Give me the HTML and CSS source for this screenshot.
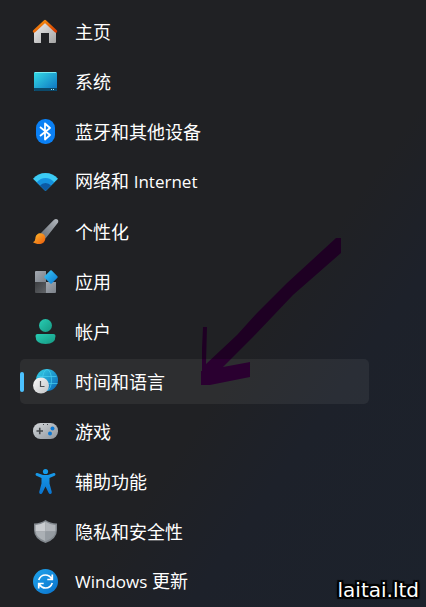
FILE: index.html
```html
<!DOCTYPE html>
<html lang="zh-CN">
<head>
    <meta charset="utf-8">
    <meta name="viewport" content="width=device-width, initial-scale=1">
    <title>设置</title>
    <link rel="stylesheet" href="styles.css">
</head>
<body>
<nav class="menu">
    <a class="item" href="#home">
        <svg class="icon" viewBox="0 0 27 27">
            <defs>
                <linearGradient id="wall" x1="0" y1="0" x2="1" y2="1"><stop offset="0" stop-color="#f0f0f0"/><stop offset="1" stop-color="#a4a4a4"/></linearGradient>
                <linearGradient id="roof" x1="0" y1="0" x2="1" y2="1"><stop offset="0" stop-color="#f99a10"/><stop offset="1" stop-color="#d83b01"/></linearGradient>
            </defs>
            <path fill="url(#wall)" d="M13 4 2 14v10q0 1 1 1h6V15h8v10h6q1 0 1-1V14z"/>
            <path fill="none" stroke="url(#roof)" stroke-width="2.8" stroke-linecap="round" stroke-linejoin="round" d="M2.2 13.2 13 3.2l10.8 10"/>
        </svg>
        <span>主页</span>
    </a>
    <a class="item" href="#system">
        <svg class="icon" viewBox="0 0 27 27">
            <defs>
                <linearGradient id="screen" x1="0" y1="0" x2="1" y2="1"><stop offset="0" stop-color="#35dce6"/><stop offset="1" stop-color="#0b6fc0"/></linearGradient>
            </defs>
            <rect fill="url(#screen)" x="2" y="4" width="23" height="19" rx="1"/>
            <path fill="#0b4a6b" d="M2 20h23v2q0 1-1 1H3q-1 0-1-1z"/>
            <path fill="#79e9f2" d="M3 4h21v1H3z"/>
            <path fill="#a8e8f8" d="M19 21h1v1h-1zM21 21h1v1h-1z"/>
        </svg>
        <span>系统</span>
    </a>
    <a class="item" href="#devices">
        <svg class="icon" viewBox="0 0 27 27">
            <rect fill="#0a80f5" x="4" y="1" width="19" height="25" rx="9"/>
            <path fill="none" stroke="#fff" stroke-width="1.8" stroke-linejoin="round" d="M8 9l10 8-5 4.500V5.500L18 10 8 18"/>
        </svg>
        <span>蓝牙和其他设备</span>
    </a>
    <a class="item" href="#network">
        <svg class="icon" viewBox="0 0 27 27">
            <path fill="#3ccbf4" d="M13.500 23 1 10.700Q6 5 13.500 5T26 10.700z"/>
            <path fill="#1591df" d="M13.500 23 4.700 14.300Q8.500 10 13.500 10t8.800 4.300z"/>
            <path fill="#0c59a4" d="M13.500 23 8 17.600Q10 15 13.500 15t5.500 2.600z"/>
        </svg>
        <span>网络和 <span class="latin">Internet</span></span>
    </a>
    <a class="item" href="#personalization">
        <svg class="icon" viewBox="0 0 27 27">
            <defs>
                <linearGradient id="handle" x1="1" y1="0" x2="0" y2="1"><stop offset="0" stop-color="#b3b8be"/><stop offset="1" stop-color="#646b73"/></linearGradient>
                <linearGradient id="bristle" x1="0" y1="0" x2="1" y2="1"><stop offset="0" stop-color="#ffbd2e"/><stop offset="1" stop-color="#ea5a0c"/></linearGradient>
            </defs>
            <path fill="url(#handle)" d="M8.500 15.500 21.500 2.200Q23.800 .3 25.500 1.600T25.300 5.600L13.500 20.500z"/>
            <path fill="url(#bristle)" d="M1 24.300Q3.300 23.500 3.400 20.300C3.500 17 6 15 8.800 15.200Q13.300 15.900 13.300 20.200C13.300 26.500 6 27.500 1 24.300z"/>
        </svg>
        <span>个性化</span>
    </a>
    <a class="item" href="#apps">
        <svg class="icon" viewBox="0 0 27 27">
            <defs>
                <linearGradient id="tile" x1="0" y1="0" x2="1" y2="1"><stop offset="0" stop-color="#a2a8b0"/><stop offset="1" stop-color="#7c828a"/></linearGradient>
                <linearGradient id="dark" x1="0" y1="0" x2="1" y2="1"><stop offset="0" stop-color="#3b3d40"/><stop offset="1" stop-color="#606367"/></linearGradient>
                <linearGradient id="gem" x1="0" y1="0" x2="1" y2="1"><stop offset="0" stop-color="#3cc8f8"/><stop offset="1" stop-color="#0877d0"/></linearGradient>
            </defs>
            <path fill="url(#tile)" d="M4 3h10v11H3V4q0-1 1-1z"/>
            <path fill="url(#dark)" d="M3 14h11v11H4q-1 0-1-1z"/>
            <path fill="url(#tile)" d="M14 14h10v10q0 1-1 1h-9z"/>
            <path fill="url(#gem)" d="M18.300 2.600q.7-.7 1.400 0l5.700 5.700q.7.7 0 1.400l-5.700 5.700q-.7.7-1.400 0l-5.700-5.700q-.7-.7 0-1.400z"/>
        </svg>
        <span>应用</span>
    </a>
    <a class="item" href="#accounts">
        <svg class="icon" viewBox="0 0 27 27">
            <defs>
                <linearGradient id="person" x1="0" y1="0" x2="1" y2="1"><stop offset="0" stop-color="#28cdb4"/><stop offset="1" stop-color="#169882"/></linearGradient>
            </defs>
            <circle fill="url(#person)" cx="13.500" cy="7.500" r="6.500"/>
            <path fill="url(#person)" d="M5.500 16h16q2 0 2 2 0 8-10 8t-10-8q0-2 2-2z"/>
        </svg>
        <span>帐户</span>
    </a>
    <a class="item active" href="#time" aria-current="page">
        <svg class="icon" viewBox="0 0 27 27">
            <defs>
                <linearGradient id="globe" x1="0" y1="0" x2="1" y2="1"><stop offset="0" stop-color="#36d3e6"/><stop offset="1" stop-color="#0864b8"/></linearGradient>
                <linearGradient id="clock" x1="0" y1="0" x2="1" y2="1"><stop offset="0" stop-color="#fafafa"/><stop offset="1" stop-color="#c2c4c6"/></linearGradient>
            </defs>
            <circle fill="url(#globe)" cx="15" cy="12" r="11"/>
            <path fill="none" stroke="#45cbee" stroke-opacity=".75" d="M5.500 8.500h19M4.500 15.500h21"/>
            <ellipse fill="none" stroke="#45cbee" stroke-opacity=".75" cx="15" cy="12" rx="4.500" ry="10.500"/>
            <circle fill="url(#clock)" cx="9" cy="17.500" r="8"/>
            <path fill="none" stroke="#4d5054" stroke-width="1.200" d="M8.500 13v5.500h4"/>
        </svg>
        <span>时间和语言</span>
    </a>
    <a class="item" href="#gaming">
        <svg class="icon" viewBox="0 0 27 27">
            <defs>
                <linearGradient id="pad" x1="0" y1="0" x2="1" y2="1"><stop offset="0" stop-color="#d3d6d9"/><stop offset="1" stop-color="#8e959c"/></linearGradient>
            </defs>
            <rect fill="url(#pad)" x="1" y="5" width="25" height="16" rx="7.500"/>
            <path fill="none" stroke="#44484c" stroke-width="1.600" d="M4.500 13h6.500M7.750 9.700v6.600"/>
            <path fill="#44484c" d="M11 6h1v1h-1zM15 6h1v1h-1z"/>
            <circle fill="#0b78d4" cx="20.500" cy="10.500" r="2"/>
            <circle fill="#0b78d4" cx="18" cy="15.500" r="2"/>
        </svg>
        <span>游戏</span>
    </a>
    <a class="item" href="#accessibility">
        <svg class="icon" viewBox="0 0 27 27">
            <defs>
                <linearGradient id="body" x1="0" y1="0" x2="0" y2="1"><stop offset="0" stop-color="#189bea"/><stop offset="1" stop-color="#0a74cf"/></linearGradient>
            </defs>
            <circle fill="#149be8" cx="13.500" cy="3.500" r="2.600"/>
            <path fill="url(#body)" d="M5.300 5 11 7h5l5.700-2q1.300-.2 1.700.9t-.8 1.800L17.500 10v5.500l2.300 8.500q.2 1.500-1.100 1.900t-2-.9L13.500 18.500 10.300 25q-.7 1.300-2 .9T7.200 24l2.300-8.500V10L4.400 7.700Q3.200 7 3.600 5.900T5.300 5z"/>
        </svg>
        <span>辅助功能</span>
    </a>
    <a class="item" href="#privacy">
        <svg class="icon" viewBox="0 0 27 27">
            <path fill="#82888e" d="M13.500 2Q18 5.300 25 5.500V12q0 9-11.500 13Q2 21 2 12V5.500Q9 5.300 13.500 2z"/>
            <path fill="#c9ccd0" d="M13.500 3.700V13.500H3.500V7Q9 6.500 13.500 3.700z"/>
            <path fill="#b1b5ba" d="M13.500 3.700V13.500h10V7Q18 6.500 13.500 3.700z"/>
            <path fill="#abb0b5" d="M3.500 13.500h10v9.700Q4.500 20 3.500 13.500z"/>
            <path fill="#959ba1" d="M23.500 13.500h-10v9.700q9-3.200 10-9.700z"/>
        </svg>
        <span>隐私和安全性</span>
    </a>
    <a class="item" href="#update">
        <svg class="icon" viewBox="0 0 27 27">
            <defs>
                <linearGradient id="disc" x1="0" y1="0" x2="1" y2="1"><stop offset="0" stop-color="#1fa4ec"/><stop offset="1" stop-color="#0a72cc"/></linearGradient>
            </defs>
            <circle fill="url(#disc)" cx="13.500" cy="13.500" r="12.500"/>
            <path fill="none" stroke="#fff" stroke-width="1.700" d="M6.700 12Q8.500 7 13.500 7q4 0 6.300 4M20.300 15Q18.500 20 13.500 20q-4 0-6.300-4M20.300 6.500v5h-5M6.700 20.500v-5h5"/>
        </svg>
        <span><span class="latin">Windows</span> 更新</span>
    </a>
</nav>
<svg class="arrow" width="140" height="148" viewBox="0 0 140 148" aria-hidden="true">
    <defs>
        <!-- lighter where it crosses the current row -->
        <linearGradient id="ink" gradientUnits="userSpaceOnUse" x1="0" y1="0" x2="0" y2="148">
            <stop offset="0" stop-color="#1e0023"/>
            <stop offset=".8176" stop-color="#1e0023"/>
            <stop offset=".8176" stop-color="#2a0030"/>
            <stop offset="1" stop-color="#2a0030"/>
        </linearGradient>
    </defs>
    <path fill="url(#ink)" d="M135 0h5v15L92 57 52 99 22 129 49 124v15L9 147H0v-14h1v-23l1-21h4l-1 37L36 97 56 75 86 45z"/>
</svg>
<div class="watermark">laitai.ltd</div>
</body>
</html>
```
FILE: styles.css
```css
body {
    margin: 0;
    min-height: 100vh;
    position: relative;
    color: #fff;
    background: linear-gradient(125deg, #202124 58%, #1d212a 72%, #1c222c);
    font-family: "Open Sans", "Noto Sans CJK SC", sans-serif;
}

.menu {
    display: flex;
    flex-direction: column;
    gap: 5px;
    padding: 9px 57px 3px 20px;
}

.item {
    display: flex;
    align-items: center;
    gap: 16px;
    height: 45px;
    padding-left: 12px;
    border-radius: 5px;
    color: #fff;
    font-size: 18px;
    line-height: 24px;
    text-decoration: none;
    white-space: nowrap;
}
.item:hover, .active {
    background-color: rgba(255, 255, 255, 0.06);
}
.latin {
    font-size: 17px;
}

/* accent bar at the left edge of the current page */
.active {
    position: relative;
}
.active:before {
    content: "";
    position: absolute;
    left: 0;
    top: 13px;
    width: 4px;
    height: 20px;
    border-radius: 2px;
    background-color: #4cc2ff;
}

.icon {
    flex: none;
    width: 27px;
    height: 27px;
}

.arrow {
    position: absolute;
    left: 201px;
    top: 238px;
    pointer-events: none;
}

.watermark {
    position: absolute;
    right: 7px;
    bottom: 4px;
    font: 20px/26px "DejaVu Sans", sans-serif;
    text-shadow: -2px 0 #000, 2px 0 #000, 0 -2px #000, 0 2px #000,
        -2px -2px 1px #000, 2px -2px 1px #000, -2px 2px 1px #000, 2px 2px 1px #000;
}
```
